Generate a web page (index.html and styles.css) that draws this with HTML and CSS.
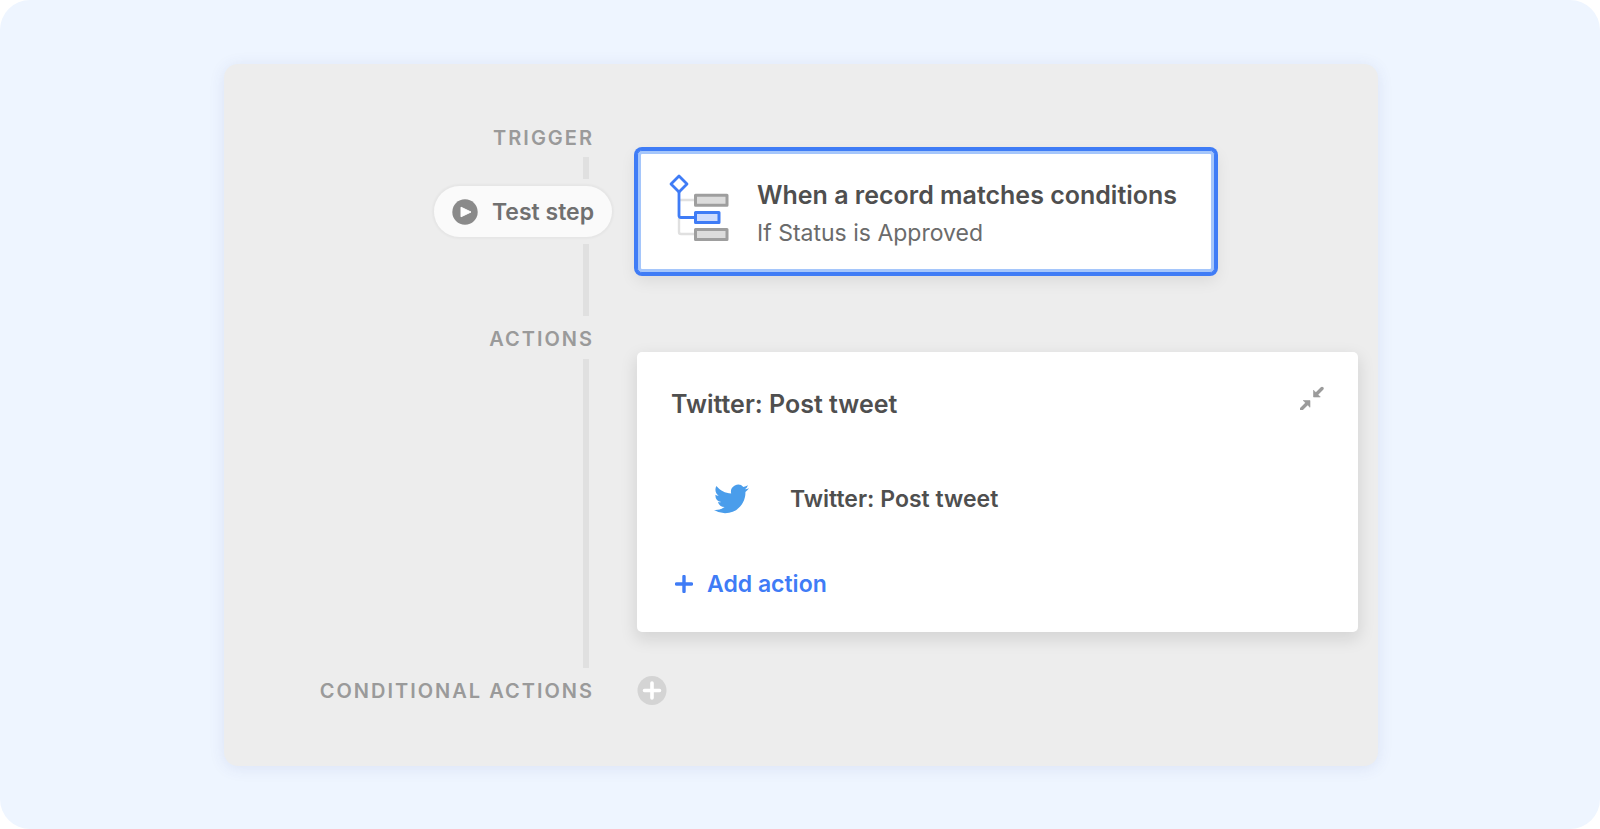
FILE: index.html
```html
<!DOCTYPE html>
<html lang="en">
<head>
    <meta charset="UTF-8">
    <meta name="viewport" content="width=device-width, initial-scale=1">
    <title>Automation - Post tweet</title>

    <link rel="stylesheet" href="styles.css">
</head>
<body>

<main class="stage">
    <div class="panel">

        <section class="row">
            <div class="side">
                <h2 class="label">TRIGGER</h2>
                <span class="rail rail-short"></span>
                <button class="test-btn" type="button">
                    <svg width="26" height="26" viewBox="0 0 26 26" aria-hidden="true">
                        <circle cx="13" cy="13" r="12.7" fill="#8a8a8a"/>
                        <path d="M9 8.2v9.6l10-4.8z" fill="#fff" stroke="#fff" stroke-width="1" stroke-linejoin="round"/>
                    </svg>
                    Test step
                </button>
                <span class="rail"></span>
            </div>
            <article class="card trigger-card">
                <svg width="60" height="68" viewBox="0 0 60 68" fill="none" aria-hidden="true">
                    <path d="M10 26h16M10 44v14q0 2 2 2h14" stroke="#e0e0e0" stroke-width="2.4"/>
                    <path d="M10 18v23.500q0 2 2 2h14" stroke="#3f7cf6" stroke-width="2.8"/>
                    <path d="M10 2l8 8-8 8-8-8z" stroke="#3f7cf6" stroke-width="2.8" stroke-linejoin="round" fill="#fff"/>
                    <rect x="26.500" y="21.200" width="31.500" height="10" fill="#dcdcdc" stroke="#9e9e9e" stroke-width="3" stroke-linejoin="round"/>
                    <rect x="26.500" y="38.500" width="23.500" height="10" fill="#cfdcfc" stroke="#3f7cf6" stroke-width="3" stroke-linejoin="round"/>
                    <rect x="26.500" y="55.500" width="31.500" height="10" fill="#dcdcdc" stroke="#9e9e9e" stroke-width="3" stroke-linejoin="round"/>
                </svg>
                <div class="trigger-text">
                    <h3>When a record matches conditions</h3>
                    <p>If Status is Approved</p>
                </div>
            </article>
        </section>

        <section class="row">
            <div class="side">
                <h2 class="label">ACTIONS</h2>
                <span class="rail rail-actions"></span>
            </div>
            <article class="card actions-card">
                <header>
                    <h3>Twitter: Post tweet</h3>
                    <button class="icon-btn" type="button" aria-label="Collapse">
                        <svg width="24" height="24" viewBox="0 0 24 24" aria-hidden="true">
                            <path d="M22 2.500L16.500 8M1.500 23L7 17.500" stroke="#9b9b9b" stroke-width="3.400" stroke-linecap="round"/>
                            <path d="M13.500 4.200v6.800h6.800zM10 21.300v-6.800H3.200z" fill="#9b9b9b" stroke="#9b9b9b" stroke-width=".6" stroke-linejoin="round"/>
                        </svg>
                    </button>
                </header>
                <div class="action">
                    <svg width="35" height="30" viewBox="0 2 24 20" aria-hidden="true">
                        <path fill="#4a9deb" d="M23.953 4.57a10 10 0 01-2.825.775 4.958 4.958 0 002.163-2.723c-.951.555-2.005.959-3.127 1.184a4.92 4.92 0 00-8.384 4.482C7.69 8.095 4.067 6.13 1.64 3.162a4.822 4.822 0 00-.666 2.475c0 1.71.87 3.213 2.188 4.096a4.904 4.904 0 01-2.228-.616v.06a4.923 4.923 0 003.946 4.827 4.996 4.996 0 01-2.212.085 4.936 4.936 0 004.604 3.417 9.867 9.867 0 01-6.102 2.105c-.39 0-.779-.023-1.17-.067a13.995 13.995 0 007.557 2.209c9.053 0 13.998-7.496 13.998-13.985 0-.21 0-.42-.015-.63A9.935 9.935 0 0024 4.59z"/>
                    </svg>
                    <span>Twitter: Post tweet</span>
                </div>
                <button class="add-btn" type="button">
                    <svg width="18" height="18" viewBox="0 0 18 18" aria-hidden="true">
                        <path d="M9 1.500v15M1.500 9h15" stroke="#3f7cf6" stroke-width="3.400" stroke-linecap="round"/>
                    </svg>
                    Add action
                </button>
            </article>
        </section>

        <section class="row row-conditional">
            <div class="side">
                <h2 class="label">CONDITIONAL ACTIONS</h2>
            </div>
            <button class="icon-btn" type="button" aria-label="Add conditional action">
                <svg width="30" height="30" viewBox="0 0 30 30" aria-hidden="true">
                    <circle cx="15" cy="14.500" r="14.500" fill="#d4d4d4"/>
                    <path d="M15 7v15M7.500 14.500h15" stroke="#fff" stroke-width="3.600" stroke-linecap="round"/>
                </svg>
            </button>
        </section>

    </div>
</main>

</body>
</html>
```
FILE: styles.css
```css
* {
    box-sizing: border-box;
}
body {
    margin: 0;
    background: #fff;
    font-family: Inter, "Liberation Sans", sans-serif;
    color: #4f4f4f;
}
h2, h3, p {
    margin: 0;
}
svg {
    display: block;
    flex-shrink: 0;
}
button {
    margin: 0;
    padding: 0;
    border: none;
    background: none;
    font-family: inherit;
    cursor: pointer;
}
.stage {
    min-height: 100vh;
    padding: 64px 222px 62px 224px;
    background: #eef5ff;
    border-radius: 30px;
}
.panel {
    padding: 62px 20px 60px 0;
    background: #ededed;
    border-radius: 14px;
    box-shadow: 0 2px 16px rgba(60, 70, 160, 0.1);
}

/* Each row has the step label and rail on the left, its card on the right */
.row {
    display: grid;
    grid-template-columns: 388px 1fr;
    column-gap: 25px;
}
.row-conditional {
    align-items: center;
}
.side {
    display: flex;
    flex-direction: column;
    align-items: flex-end;
}
.label {
    margin-right: 18px;
    font-size: 20px;
    line-height: 24px;
    font-weight: 600;
    letter-spacing: 2px;
    color: #9a9a9a;
}
.rail {
    flex: 1;
    width: 6px;
    margin: 7px 23px 11px 0;
    background: #e0e0e0;
}
.rail-short {
    flex: none;
    height: 22px;
    margin-bottom: 7px;
}
.rail-actions {
    margin-top: 8px;
    margin-bottom: 8px;
}
.test-btn {
    display: flex;
    align-items: center;
    gap: 14px;
    height: 51px;
    padding: 0 18px;
    background: #fafafa;
    border-radius: 26px;
    box-shadow: 0 0 2px 2px rgba(0, 0, 0, 0.03);
    font-size: 23px;
    font-weight: 600;
    color: #707070;
}

.card {
    background: #fff;
    border-radius: 5px;
}
.card h3 {
    font-size: 25px;
    line-height: 36px;
    font-weight: 600;
}
.trigger-card {
    display: flex;
    gap: 28px;
    justify-self: start;
    height: 123px;
    margin: 24px 0 54px;
    padding: 23px 37px 0 31px;
    border: 1px solid #3f7cf6;
    box-shadow: 0 0 0 3px #3f7cf6, inset 0 0 0 3px #a5c6fb, 0 6px 16px 2px rgba(0, 0, 0, 0.08);
}
.trigger-text {
    padding-top: 3px;
}
.trigger-text p {
    margin-top: 2px;
    font-size: 23px;
    line-height: 36px;
    color: #6b6b6b;
}
.actions-card {
    margin: 25px 0 44px;
    padding: 34px 34px 32px;
    box-shadow: 0 6px 16px 2px rgba(0, 0, 0, 0.1);
}
.actions-card header {
    display: flex;
    justify-content: space-between;
    align-items: flex-start;
}
.action {
    display: flex;
    align-items: center;
    gap: 41px;
    margin: 61px 0 53px 43px;
    font-size: 23px;
    line-height: 32px;
    font-weight: 600;
}
.add-btn {
    display: flex;
    align-items: center;
    gap: 14px;
    margin-left: 4px;
    font-size: 23px;
    line-height: 32px;
    font-weight: 600;
    color: #3f7cf6;
}
```
